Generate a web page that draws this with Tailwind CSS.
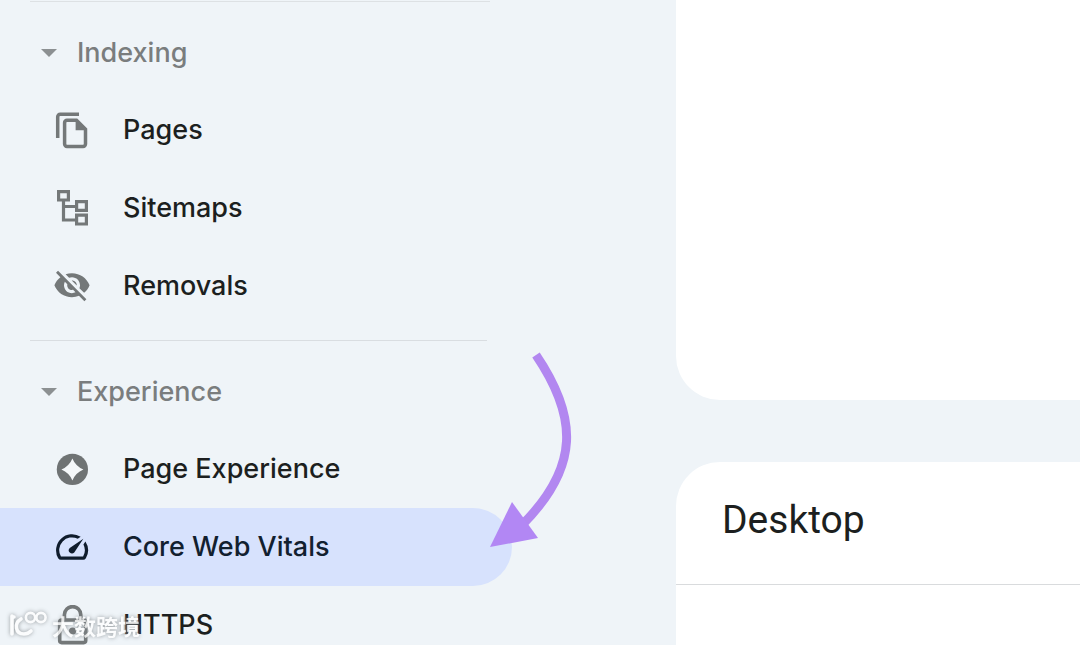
<!DOCTYPE html>
<html lang="en">
  <head>
    <meta charset="UTF-8" />
    <meta name="viewport" content="width=device-width, initial-scale=1.0" />
    <title>Core Web Vitals</title>
    <script src="https://cdn.jsdelivr.net/npm/@tailwindcss/browser@4"></script>
  </head>
  <body class="relative flex h-screen overflow-hidden bg-[#eff4f8] font-['Inter',sans-serif] text-[#1c1f20]">
    <!-- Sidebar -->
    <nav class="w-[676px] shrink-0 pt-px text-[27px] font-medium leading-8">
      <hr class="ml-[30px] w-[460px] border-[#dde1e4]" />
      <section class="pt-3">
        <button type="button" class="flex h-[77px] items-center pl-[41px] text-[#7a7d7e]">
          <svg class="mr-5 h-2 w-4" viewBox="0 0 16 8" fill="#8c9092"><path d="M0 0h16L8 8z" /></svg>
          Indexing
        </button>
        <a href="#pages" class="flex h-[78px] items-center gap-[31px] pl-[52px]">
          <svg class="size-10" viewBox="0 0 40 40" fill="none" stroke="#747879" stroke-width="3.5">
            <path d="M27 4.2H8.2a2.5 2.5 0 0 0-2.5 2.5V28" />
            <path d="M15 10.3h9.5l9 9V34a2.4 2.4 0 0 1-2.4 2.4H15a2.4 2.4 0 0 1-2.4-2.4V12.7a2.4 2.4 0 0 1 2.4-2.4z" />
            <path d="M23.6 9.5v10.7h10.7z" fill="#747879" stroke="none" />
          </svg>
          Pages
        </a>
        <a href="#sitemaps" class="flex h-[78px] items-center gap-[31px] pl-[52px]">
          <svg class="size-10" viewBox="0 0 40 40" fill="none" stroke="#747879" stroke-width="3.2">
            <path d="M6.6 3.6h9.8v8.4H6.6zM24.6 13.6h9.8v8.8H24.6zM24.6 27.2h9.8v8.8H24.6zM11.5 12v20h13M11.5 18.5h13" />
          </svg>
          Sitemaps
        </a>
        <a href="#removals" class="flex h-[78px] items-center gap-[31px] pl-[52px]">
          <svg class="size-10" viewBox="-0.5 0 25 25" fill="#747879">
            <path d="M12 7c2.76 0 5 2.24 5 5 0 .65-.13 1.26-.36 1.83l2.92 2.92c1.51-1.26 2.7-2.89 3.43-4.75-1.73-4.39-6-7.5-11-7.5-1.4 0-2.74.25-3.98.7l2.16 2.16C10.74 7.13 11.35 7 12 7zM2 4.27l2.28 2.28.46.46C3.08 8.3 1.78 10.02 1 12c1.73 4.39 6 7.5 11 7.5 1.55 0 3.03-.3 4.38-.84l.42.42L19.73 22 21 20.73 3.27 3 2 4.27zM7.53 9.8l1.55 1.55c-.05.21-.08.43-.08.65 0 1.66 1.34 3 3 3 .22 0 .44-.03.65-.08l1.55 1.55c-.67.33-1.41.53-2.2.53-2.76 0-5-2.24-5-5 0-.79.2-1.53.53-2.2zm4.31-.78l3.15 3.15.02-.16c0-1.66-1.34-3-3-3l-.17.01z" />
          </svg>
          Removals
        </a>
      </section>
      <hr class="ml-[30px] mt-[15px] w-[457px] border-[#d9dde1]" />
      <section class="pt-3">
        <button type="button" class="flex h-[77px] items-center pl-[41px] text-[#7a7d7e]">
          <svg class="mr-5 h-2 w-4" viewBox="0 0 16 8" fill="#8c9092"><path d="M0 0h16L8 8z" /></svg>
          Experience
        </button>
        <a href="#page-experience" class="flex h-[78px] items-center gap-[31px] pl-[52px]">
          <svg class="size-10" viewBox="0 0 40 40">
            <circle cx="20.4" cy="20.4" r="15.6" fill="#6f7374" />
            <path d="M20.4 9.4Q23.6 17.2 31.4 20.4 23.6 23.6 20.4 31.4 17.2 23.6 9.4 20.4 17.2 17.2 20.4 9.4z" fill="#f5f8fa" />
          </svg>
          Page Experience
        </a>
        <a href="#core-web-vitals" aria-current="page" class="flex h-[78px] w-[512px] items-center gap-[31px] rounded-r-full bg-[#d7e2fd] pl-[52px] text-[#12202f]">
          <svg class="size-10" viewBox="-0.5 -0.5 25 25" fill="#0f1c2c">
            <path d="M20.38 8.57l-1.23 1.85a8 8 0 0 1-.22 7.58H5.07A8 8 0 0 1 15.58 6.85l1.85-1.23A10 10 0 0 0 3.35 19a2 2 0 0 0 1.72 1h13.85a2 2 0 0 0 1.74-1 10 10 0 0 0-.27-10.44zm-9.79 6.84a2 2 0 0 0 2.83 0l5.66-8.49-8.49 5.66a2 2 0 0 0 0 2.83z" />
          </svg>
          Core Web Vitals
        </a>
        <a href="#https" class="flex h-[78px] items-center gap-[31px] pl-[52px]">
          <svg class="size-10" viewBox="0 0 40 40" fill="none" stroke="#747879" stroke-width="3.6">
            <rect x="7.7" y="15" width="26" height="22.6" rx="2" />
            <path d="M12.4 15V9.8a8.2 8.2 0 0 1 16.4 0V15" />
            <circle cx="20.6" cy="26" r="3.6" fill="#747879" stroke="none" />
          </svg>
          HTTPS
        </a>
      </section>
    </nav>

    <!-- Report cards -->
    <main class="flex min-w-0 flex-1 flex-col gap-[62px]">
      <section class="h-[400px] shrink-0 rounded-bl-[44px] bg-white"></section>
      <section class="flex-1 rounded-tl-[44px] bg-white">
        <h2 class="flex h-[123px] items-center border-b border-[#d9dbdd] pb-1.5 pl-[46px] font-['Roboto',sans-serif] text-[39px] font-normal">
          Desktop
        </h2>
      </section>
    </main>

    <!-- Arrow pointing at the active item -->
    <svg class="absolute left-[480px] top-[345px] h-[210px] w-[100px]" viewBox="0 0 100 210" fill="none">
      <path d="M56 10C98 72 100 122 42 180" stroke="#b287f0" stroke-width="9" />
      <path d="M10 202L32 157 58 193z" fill="#b287f4" />
    </svg>

    <!-- Watermark -->
    <div class="absolute bottom-1 left-2 flex items-center gap-1 opacity-80 drop-shadow-[0_0_2px_#7c8286]">
      <svg class="h-8 w-10" viewBox="0 0 40 32" fill="none" stroke="#fff" stroke-width="3.6" stroke-linecap="round">
        <path d="M4 7v18M4 8h2M13 10c-7 4-6 15 3 15 3 0 5-1 7-3" />
        <circle cx="22.5" cy="8.5" r="4.6" stroke-width="2.6" />
        <circle cx="33" cy="8.5" r="4.6" stroke-width="2.6" />
      </svg>
      <span class="font-['Noto_Sans_CJK_SC',sans-serif] text-[22px] font-bold leading-8 text-white" lang="zh">大数跨境</span>
    </div>
  </body>
</html>
